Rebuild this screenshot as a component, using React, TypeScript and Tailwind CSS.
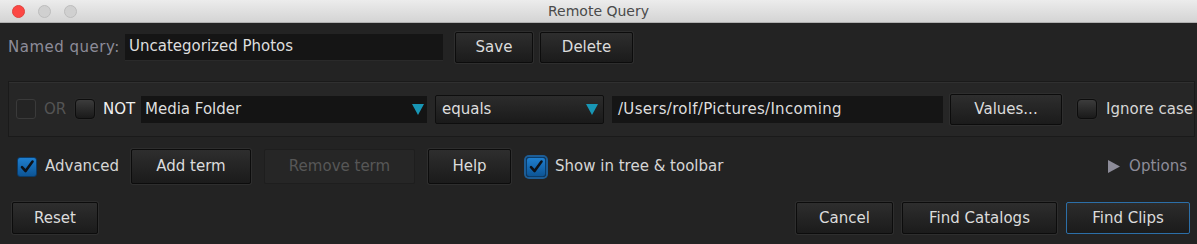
import React from "react";

const font = { fontFamily: '"DejaVu Sans", "Liberation Sans", sans-serif' };

function Btn({ children, className = "", disabled = false, primary = false }: { children: React.ReactNode; className?: string; disabled?: boolean; primary?: boolean }) {
  const base = disabled
    ? "bg-[#262626] border-[#1e1e1e] text-[#575757]"
    : primary
    ? "bg-gradient-to-b from-[#2c2c2c] to-[#1b1b1b] border-[#2c6fa8] text-[#dcdcdc]"
    : "bg-gradient-to-b from-[#2e2e2e] to-[#1b1b1b] border-[#0c0c0c] text-[#dcdcdc] shadow-[0_0_0_1px_#2e2e2e]";
  return (
    <div className={`flex items-center justify-center border text-[15px] rounded-[2px] ${base} ${className}`}>
      {children}
    </div>
  );
}

function Box({ checked = false, disabled = false, focus = false }: { checked?: boolean; disabled?: boolean; focus?: boolean }) {
  if (disabled) return <div className="w-[20px] h-[20px] border border-[#3a3a3a] rounded-[3px] bg-[#242424]" />;
  if (checked)
    return (
      <div className={`w-[20px] h-[20px] rounded-[3px] flex items-center justify-center bg-gradient-to-b from-[#1f7fcf] to-[#0d5596] border border-[#0a3c6a] ${focus ? "shadow-[0_0_0_2px_#1d5d96]" : ""}`}>
        <svg width="16" height="16" viewBox="0 0 16 16">
          <path d="M3 8.2 L6.6 12 L13.5 2.5" fill="none" stroke="#0d1117" strokeWidth="2.6" strokeLinecap="round" strokeLinejoin="round" />
        </svg>
      </div>
    );
  return <div className="w-[20px] h-[20px] rounded-[4px] border border-[#0d0d0d] bg-gradient-to-b from-[#3c3c3c] to-[#1a1a1a] shadow-[0_0_0_1px_#2a2a2a]" />;
}

function Tri() {
  return (
    <svg width="12" height="11" viewBox="0 0 12 11">
      <path d="M0 0 H12 L6 11 Z" fill="#1896b5" />
    </svg>
  );
}

export default function App() {
  return (
    <div style={font} className="w-[1197px] h-[244px] bg-[#232323] flex flex-col overflow-hidden">
      {/* title bar */}
      <div className="h-[23px] bg-gradient-to-b from-[#ececec] to-[#d4d4d4] border-b border-[#b0b0b0] flex items-center relative">
        <div className="flex items-center gap-[13px] pl-[12px]">
          <div className="w-[13px] h-[13px] rounded-full bg-[#fc4744] border border-[#e0443e]" />
          <div className="w-[13px] h-[13px] rounded-full bg-[#d0d0d0] border border-[#bdbdbd]" />
          <div className="w-[13px] h-[13px] rounded-full bg-[#d0d0d0] border border-[#bdbdbd]" />
        </div>
        <div className="absolute left-0 right-0 text-center text-[14px] text-[#4a4a4a] pointer-events-none">Remote Query</div>
      </div>

      {/* named query row */}
      <div className="flex items-center mt-[8px] h-[32px] pl-[8px]">
        <span className="text-[15px] text-[#8d8c99] w-[117px] tracking-[0.5px]">Named query:</span>
        <div className="w-[318px] h-[27px] bg-[#151515] border-b border-[#2a2a2a] flex items-center pl-[4px] text-[15px] text-[#dedede]">Uncategorized Photos</div>
        <Btn className="ml-[12px] w-[78px] h-[31px]">Save</Btn>
        <Btn className="ml-[7px] w-[93px] h-[31px]">Delete</Btn>
      </div>

      {/* term panel */}
      <div className="mt-[18px] mx-[8px] mr-[2px] h-[56px] border border-[#1a1a1a] bg-[#262626] shadow-[inset_0_1px_0_#303030] flex items-center pl-[7px]">
        <Box disabled />
        <span className="ml-[8px] text-[15px] text-[#545454] w-[31px]">OR</span>
        <Box />
        <span className="ml-[8px] text-[15px] text-[#f0f0f0] w-[38px]">NOT</span>
        <div className="w-[286px] h-[27px] bg-[#141414] flex items-center justify-between pl-[4px] pr-[3px] text-[15px] text-[#dedede]">
          <span>Media Folder</span>
          <Tri />
        </div>
        <div className="ml-[8px] w-[169px] h-[29px] rounded-[2px] bg-gradient-to-b from-[#2c2c2c] to-[#1a1a1a] border border-[#0e0e0e] flex items-center justify-between pl-[6px] pr-[5px] text-[15px] text-[#dedede]">
          <span>equals</span>
          <Tri />
        </div>
        <div className="ml-[8px] w-[331px] h-[27px] bg-[#151515] flex items-center pl-[6px] text-[15px] text-[#dedede] tracking-[0.3px]">/Users/rolf/Pictures/Incoming</div>
        <Btn className="ml-[7px] w-[112px] h-[31px]">Values...</Btn>
        <div className="ml-[15px]"><Box /></div>
        <span className="ml-[9px] text-[15px] text-[#d6d6d6]">Ignore case</span>
      </div>

      {/* advanced row */}
      <div className="flex items-center mt-[12px] h-[35px] pl-[17px]">
        <Box checked />
        <span className="ml-[8px] text-[15px] text-[#d6d6d6] w-[86px]">Advanced</span>
        <Btn className="w-[120px] h-[35px]">Add term</Btn>
        <Btn disabled className="ml-[13px] w-[151px] h-[35px]">Remove term</Btn>
        <Btn className="ml-[13px] w-[83px] h-[35px]">Help</Btn>
        <div className="ml-[15px]"><Box checked focus /></div>
        <span className="ml-[9px] text-[15px] text-[#d6d6d6]">Show in tree &amp; toolbar</span>
        <div className="ml-auto mr-[10px] flex items-center text-[15px] text-[#8d8c99]">
          <svg width="12" height="13" viewBox="0 0 12 13" className="mr-[9px]">
            <path d="M0 0 L12 6.5 L0 13 Z" fill="#8d8c99" />
          </svg>
          Options
        </div>
      </div>

      {/* bottom row */}
      <div className="flex items-center mt-[18px] h-[32px] pl-[12px] pr-[7px]">
        <Btn className="w-[86px] h-[32px]">Reset</Btn>
        <Btn className="ml-auto w-[97px] h-[32px]">Cancel</Btn>
        <Btn className="ml-[9px] w-[155px] h-[32px]">Find Catalogs</Btn>
        <Btn primary className="ml-[9px] w-[124px] h-[32px]">Find Clips</Btn>
      </div>
    </div>
  );
}
